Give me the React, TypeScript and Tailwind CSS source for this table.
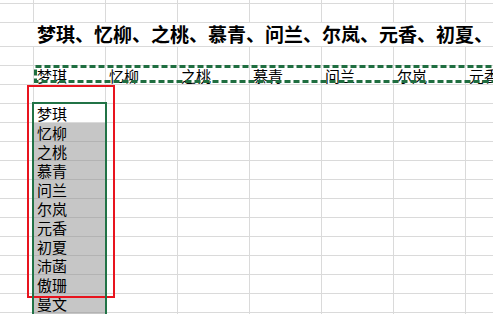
const names = ["梦琪", "忆柳", "之桃", "慕青", "问兰", "尔岚", "元香"];
const list = ["梦琪", "忆柳", "之桃", "慕青", "问兰", "尔岚", "元香", "初夏", "沛菡", "傲珊", "曼文", ""];

const cell = "border-r border-b border-[#dadada]";

function BlankRow({ h }: { h: string }) {
  return (
    <>
      {Array.from({ length: 8 }).map((_, i) => (
        <div key={i} className={`${cell} ${h}`} />
      ))}
    </>
  );
}

export default function App() {
  return (
    <div className="relative h-[314px] w-[493px] overflow-hidden bg-white font-['Noto_Sans_CJK_SC','Noto_Sans',sans-serif] text-black">
      <div className="grid w-[538px] grid-cols-[34px_repeat(7,72px)]">
        <BlankRow h="h-[4px]" />
        <BlankRow h="h-[19px]" />

        {/* heading row: text runs over the columns, so no vertical lines */}
        <div className="col-span-8 flex h-[24px] items-end border-b border-[#dadada] pl-[37px] text-[19px] leading-[24px] font-bold whitespace-nowrap">
          梦琪、忆柳、之桃、慕青、问兰、尔岚、元香、初夏、沛菡、
        </div>

        <BlankRow h="h-[19px]" />

        {/* row copied with the marquee */}
        <div className={`${cell} h-[19px]`} />
        {names.map((n) => (
          <div key={n} className={`${cell} h-[19px] overflow-hidden pl-[3px] text-[15px] leading-[19px] whitespace-nowrap`}>
            {n}
          </div>
        ))}

        <BlankRow h="h-[19px]" />

        {list.map((n, i) => (
          <div key={i} className="contents">
            <div className={`${cell} h-[19px]`} />
            <div
              className={
                i === 0
                  ? `${cell} h-[19px] pl-[3px] text-[15px] leading-[19px]`
                  : "h-[19px] border-r border-b border-[#b3b3b3] bg-[#c6c6c6] pl-[3px] text-[15px] leading-[19px]"
              }
            >
              {n}
            </div>
            {Array.from({ length: 6 }).map((_, j) => (
              <div key={j} className={`${cell} h-[19px]`} />
            ))}
          </div>
        ))}
      </div>

      {/* copy marquee */}
      <svg className="absolute left-[34px] top-[65px]" width="470" height="19">
        <rect x="1.5" y="1.5" width="480" height="15" fill="none" stroke="#1f6e40" strokeWidth="3" strokeDasharray="6 3" />
      </svg>

      {/* red annotation frame */}
      <div className="absolute left-[27px] top-[85px] h-[213px] w-[88px] border-2 border-[#e8141e]" />

      {/* selected range */}
      <div className="absolute left-[32px] top-[102px] h-[230px] w-[75px] border-2 border-[#217346]" />
    </div>
  );
}
